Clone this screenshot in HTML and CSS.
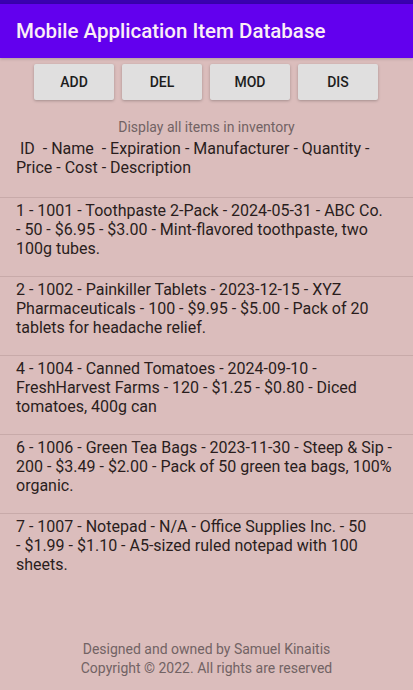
FILE: index.html
```html
<!DOCTYPE html>
<html>
<head>
<meta charset="utf-8">
<link rel="stylesheet" href="styles.css">
</head>
<body>
<div class="screen">
  <div class="statusbar"></div>
  <header class="appbar">Mobile Application Item Database</header>
  <div class="buttons">
    <button class="btn">ADD</button>
    <button class="btn">DEL</button>
    <button class="btn">MOD</button>
    <button class="btn">DIS</button>
  </div>
  <div class="subtitle">Display all items in inventory</div>
  <div class="header">&nbsp;ID &nbsp;- Name &nbsp;- Expiration - Manufacturer - Quantity - Price - Cost - Description</div>
  <div class="list">
    <div class="row">1 - 1001 - Toothpaste 2-Pack - 2024-05-31 - ABC Co.<br>- 50 - $6.95 - $3.00 - Mint-flavored toothpaste, two 100g tubes.</div>
    <div class="row">2 - 1002 - Painkiller Tablets - 2023-12-15 - XYZ Pharmaceuticals - 100 - $9.95 - $5.00 - Pack of 20 tablets for headache relief.</div>
    <div class="row">4 - 1004 - Canned Tomatoes - 2024-09-10 - FreshHarvest Farms - 120 - $1.25 - $0.80 - Diced tomatoes, 400g can</div>
    <div class="row">6 - 1006 - Green Tea Bags - 2023-11-30 - Steep &amp; Sip - 200 - $3.49 - $2.00 - Pack of 50 green tea bags, 100% organic.</div>
    <div class="row last">7 - 1007 - Notepad - N/A - Office Supplies Inc. - 50<br>- $1.99 - $1.10 - A5-sized ruled notepad with 100 sheets.</div>
  </div>
  <footer class="footer">
    <div>Designed and owned by Samuel Kinaitis</div>
    <div>Copyright © 2022. All rights are reserved</div>
  </footer>
</div>
</body>
</html>
```

FILE: styles.css
```css
html, body {
  margin: 0;
  padding: 0;
}
body {
  background: #dbbdbc;
  font-family: Roboto, "Noto Sans", sans-serif;
  color: #2a1d1d;
}
.screen {
  min-height: 690px;
  display: flex;
  flex-direction: column;
}
.statusbar {
  height: 4px;
  background: #3a00b0;
}
.appbar {
  height: 54px;
  background: #6200ee;
  color: #fbeef6;
  font-size: 20.5px;
  font-weight: 500;
  display: flex;
  align-items: center;
  padding: 0 16px;
  box-shadow: 0 1px 3px rgba(0,0,0,0.2);
}
.buttons {
  display: flex;
  justify-content: center;
  gap: 8px;
  margin-top: 6px;
  padding-right: 1px;
}
.btn {
  width: 80px;
  height: 36px;
  border: none;
  border-radius: 2px;
  background: #e0dfdf;
  box-shadow: 0 1px 3px rgba(0,0,0,0.25);
  font-family: Roboto, sans-serif;
  font-size: 14px;
  font-weight: 500;
  color: #1d1d1d;
  padding: 0;
}
.subtitle {
  margin-top: 19px;
  text-align: center;
  font-size: 14px;
  line-height: 16px;
  color: #726364;
}
.header {
  padding: 4px 16px 0;
  font-size: 16px;
  line-height: 19px;
  height: 58px;
}
.list {
  border-top: 1px solid #c8aaa9;
}
.row {
  box-sizing: border-box;
  padding: 3px 16px 0;
  height: 79px;
  font-size: 16px;
  line-height: 19px;
  border-bottom: 1px solid #c8aaa9;
}
.row.last {
  border-bottom: none;
}
.footer {
  margin-top: auto;
  text-align: center;
  font-size: 14px;
  line-height: 19px;
  color: #726364;
  padding-bottom: 12px;
}
```
